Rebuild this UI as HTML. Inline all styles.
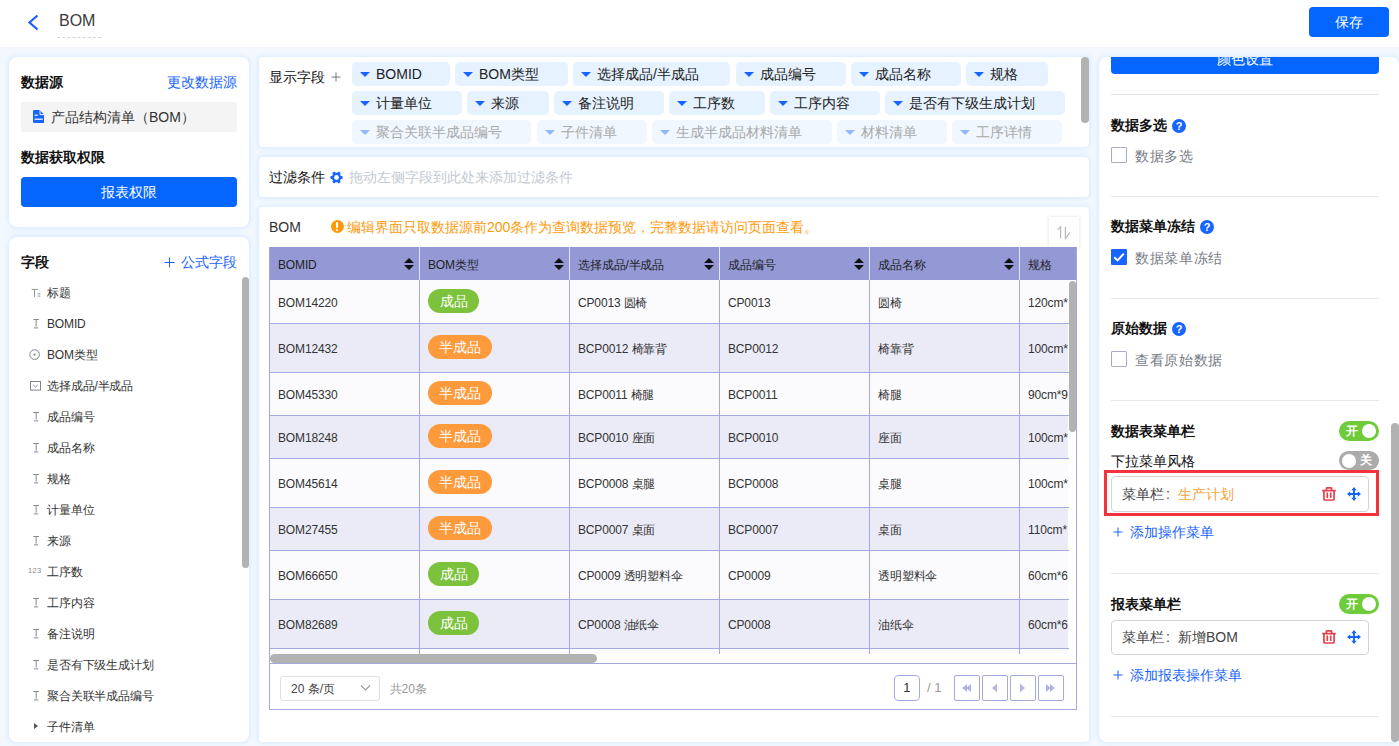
<!DOCTYPE html>
<html lang="zh">
<head>
<meta charset="utf-8">
<title>BOM</title>
<style>
*{box-sizing:border-box;margin:0;padding:0}
html,body{width:1399px;height:746px;overflow:hidden}
body{font-family:"Liberation Sans",sans-serif;font-size:14px;color:#222;background:#f2f8fe;position:relative}
.abs{position:absolute}
.hdr{position:absolute;left:0;top:0;width:1399px;height:47px;background:#fff}
.card{position:absolute;background:#fff;border-radius:8px;box-shadow:0 0 5px 1px rgba(185,212,255,.45)}
.card.m{border-radius:4px}
.b{font-weight:bold}
.blue{color:#1764ff}
.btn{position:absolute;background:#0565ff;color:#fff;border-radius:4px;text-align:center}
.t{position:absolute;white-space:nowrap;line-height:20px}
/* field list */
.fi{position:absolute;left:47px;font-size:12px;letter-spacing:-.15px;color:#333;white-space:nowrap;line-height:16px}
.ic{position:absolute;left:30px;width:12px;height:12px;overflow:visible}
/* tags */
.tag{position:absolute;height:24px;background:#e6f2ff;border-radius:5px;font-size:14px;line-height:24px;color:#222;white-space:nowrap}
.tag i{position:absolute;left:8px;top:10px;width:0;height:0;border-left:5px solid transparent;border-right:5px solid transparent;border-top:5px solid #1764ff}
.tag span{position:absolute;left:24px;top:0}
.tag.dim{background:#f0f7ff;color:#a9a9a9}
.tag.dim i{border-top-color:#8fb8ff}
/* table */
.th{position:absolute;top:247px;height:33.4px;background:#9499d6;color:#222;font-size:12px;letter-spacing:-.15px;line-height:37.5px;padding-left:9px;white-space:nowrap}
.sort{position:absolute;right:5px;top:10.5px;width:10px;height:12px}
.row{position:absolute;left:269px;width:799.3px;overflow:hidden}
.row.o{background:#fbfbfe}
.row.e{background:#ebebf7}
.c{position:absolute;top:0;bottom:0;font-size:12px;letter-spacing:-.15px;color:#333;white-space:nowrap}
.c span{position:absolute;left:9px;top:50%;margin-top:-6.6px;line-height:16px}
.pill{position:absolute;left:9px;height:24px;border-radius:12px;color:#fff;font-size:14px;line-height:24px;letter-spacing:0;text-align:center;font-weight:normal}
.g{background:#7cc23c;width:51px}
.or{background:#fc9a3c;width:64px}
.vl{position:absolute;width:1px;background:#a6a9de}
.hl{position:absolute;height:1px;background:#e6e8ec}
</style>
</head>
<body>
<div class="hdr">
<svg class="abs" style="left:26px;top:13px" width="14" height="18" viewBox="0 0 14 18"><path d="M11.5 2.5 L3.5 9.5 L11.5 16.5" fill="none" stroke="#1a5cff" stroke-width="2.2" stroke-linecap="butt"/></svg>
<div class="t" style="left:59px;top:11px;font-size:16px;color:#3a3a3a">BOM</div>
<div class="abs" style="left:57px;top:37px;width:44px;height:0;border-top:1px dashed #d4d4d4"></div>
<div class="btn" style="left:1309px;top:7px;width:80px;height:30px;line-height:30px;font-size:14px">保存</div>
</div>

<!-- left card 1 -->
<div class="card" style="left:9px;top:57px;width:240px;height:170px"></div>
<div class="t b" style="left:21px;top:72px;color:#111">数据源</div>
<div class="t blue" style="left:167px;top:72px">更改数据源</div>
<div class="abs" style="left:21px;top:102px;width:216px;height:30px;background:#f4f4f4;border-radius:2px"></div>
<svg class="abs" style="left:32.5px;top:110px" width="11.5" height="13" viewBox="0 0 11.5 13"><path d="M0 1 Q0 0 1 0 H6.6 L11.5 4.9 V12 Q11.5 13 10.5 13 H1 Q0 13 0 12 Z" fill="#1764ff"/><path d="M7 0.2 V4.6 H11.4" fill="none" stroke="#f4f4f4" stroke-width="1"/><rect x="1.6" y="4.6" width="3.2" height="1.2" fill="#fff"/><rect x="1.6" y="8.6" width="8.2" height="1.2" fill="#fff"/></svg>
<div class="t" style="left:51px;top:107px;color:#333">产品结构清单（BOM）</div>
<div class="t b" style="left:21px;top:147px;color:#111">数据获取权限</div>
<div class="btn" style="left:21px;top:177px;width:216px;height:30px;line-height:30px;font-size:14px">报表权限</div>

<!-- left card 2 -->
<div class="card" style="left:9px;top:237px;width:240px;height:505px"></div>
<div class="t b" style="left:21px;top:252px;color:#111">字段</div>
<svg class="abs" style="left:164px;top:257px" width="11" height="11" viewBox="0 0 11 11"><path d="M5.5 0.5 V10.5 M0.5 5.5 H10.5" stroke="#1764ff" stroke-width="1" fill="none"/></svg><div class="t blue" style="left:181px;top:252px">公式字段</div>
<div class="abs" style="left:242px;top:277px;width:7px;height:291px;background:#b2b2b2;border-radius:4px"></div>
<svg class="ic" style="top:286px" viewBox="0 0 12 12"><path d="M1.7 3.4 H8 M4.5 3.4 V10.9 M7.6 7.9 H10.4 M7.6 10.1 H10.4" fill="none" stroke="#959595" stroke-width="1"/></svg><div class="fi" style="top:285px">标题</div>
<svg class="ic" style="top:317px" viewBox="0 0 12 12"><path d="M3.3 2.5 H9 M6.15 2.5 V9.6 M4 10.9 H8.3" fill="none" stroke="#8a8a8a" stroke-width="1"/></svg><div class="fi" style="top:316px">BOMID</div>
<svg class="ic" style="top:348px" viewBox="0 0 12 12"><circle cx="4.6" cy="6.6" r="4.8" fill="none" stroke="#858585" stroke-width="1"/><circle cx="4.6" cy="6.6" r="1.1" fill="#858585"/></svg><div class="fi" style="top:347px">BOM类型</div>
<svg class="ic" style="top:379px" viewBox="0 0 12 12"><rect x="0.5" y="2.5" width="10" height="8.6" fill="none" stroke="#858585" stroke-width="1"/><path d="M3.3 6 L5.5 8 L7.7 6" fill="none" stroke="#858585" stroke-width="1"/></svg><div class="fi" style="top:378px">选择成品/半成品</div>
<svg class="ic" style="top:410px" viewBox="0 0 12 12"><path d="M3.3 2.5 H9 M6.15 2.5 V9.6 M4 10.9 H8.3" fill="none" stroke="#8a8a8a" stroke-width="1"/></svg><div class="fi" style="top:409px">成品编号</div>
<svg class="ic" style="top:441px" viewBox="0 0 12 12"><path d="M3.3 2.5 H9 M6.15 2.5 V9.6 M4 10.9 H8.3" fill="none" stroke="#8a8a8a" stroke-width="1"/></svg><div class="fi" style="top:440px">成品名称</div>
<svg class="ic" style="top:472px" viewBox="0 0 12 12"><path d="M3.3 2.5 H9 M6.15 2.5 V9.6 M4 10.9 H8.3" fill="none" stroke="#8a8a8a" stroke-width="1"/></svg><div class="fi" style="top:471px">规格</div>
<svg class="ic" style="top:503px" viewBox="0 0 12 12"><path d="M3.3 2.5 H9 M6.15 2.5 V9.6 M4 10.9 H8.3" fill="none" stroke="#8a8a8a" stroke-width="1"/></svg><div class="fi" style="top:502px">计量单位</div>
<svg class="ic" style="top:534px" viewBox="0 0 12 12"><path d="M3.3 2.5 H9 M6.15 2.5 V9.6 M4 10.9 H8.3" fill="none" stroke="#8a8a8a" stroke-width="1"/></svg><div class="fi" style="top:533px">来源</div>
<div class="abs" style="top:565px;left:28px;font-size:7.5px;color:#8a8a8a;line-height:12px;letter-spacing:.3px">123</div><div class="fi" style="top:564px">工序数</div>
<svg class="ic" style="top:596px" viewBox="0 0 12 12"><path d="M3.3 2.5 H9 M6.15 2.5 V9.6 M4 10.9 H8.3" fill="none" stroke="#8a8a8a" stroke-width="1"/></svg><div class="fi" style="top:595px">工序内容</div>
<svg class="ic" style="top:627px" viewBox="0 0 12 12"><path d="M3.3 2.5 H9 M6.15 2.5 V9.6 M4 10.9 H8.3" fill="none" stroke="#8a8a8a" stroke-width="1"/></svg><div class="fi" style="top:626px">备注说明</div>
<svg class="ic" style="top:658px" viewBox="0 0 12 12"><path d="M3.3 2.5 H9 M6.15 2.5 V9.6 M4 10.9 H8.3" fill="none" stroke="#8a8a8a" stroke-width="1"/></svg><div class="fi" style="top:657px">是否有下级生成计划</div>
<svg class="ic" style="top:689px" viewBox="0 0 12 12"><path d="M3.3 2.5 H9 M6.15 2.5 V9.6 M4 10.9 H8.3" fill="none" stroke="#8a8a8a" stroke-width="1"/></svg><div class="fi" style="top:688px">聚合关联半成品编号</div>
<div class="abs" style="top:723px;left:34px;width:0;height:0;border-top:3.5px solid transparent;border-bottom:3.5px solid transparent;border-left:4.5px solid #555"></div><div class="fi" style="top:719px">子件清单</div>

<!-- display fields card -->
<div class="card m" style="left:259px;top:57px;width:830px;height:90px"></div>
<div class="t" style="left:269px;top:67px;color:#111">显示字段</div>
<svg class="abs" style="left:331px;top:72px" width="10" height="10" viewBox="0 0 10 10"><path d="M5 0.5 V9.5 M0.5 5 H9.5" stroke="#777" stroke-width="1" fill="none"/></svg>
<div class="tag" style="left:352px;top:62px;width:98px"><i></i><span>BOMID</span></div>
<div class="tag" style="left:455px;top:62px;width:113px"><i></i><span>BOM类型</span></div>
<div class="tag" style="left:573px;top:62px;width:157px"><i></i><span>选择成品/半成品</span></div>
<div class="tag" style="left:736px;top:62px;width:110px"><i></i><span>成品编号</span></div>
<div class="tag" style="left:851px;top:62px;width:110px"><i></i><span>成品名称</span></div>
<div class="tag" style="left:966px;top:62px;width:82px"><i></i><span>规格</span></div>
<div class="tag" style="left:352px;top:91px;width:110px"><i></i><span>计量单位</span></div>
<div class="tag" style="left:467px;top:91px;width:82px"><i></i><span>来源</span></div>
<div class="tag" style="left:554px;top:91px;width:110px"><i></i><span>备注说明</span></div>
<div class="tag" style="left:669px;top:91px;width:96px"><i></i><span>工序数</span></div>
<div class="tag" style="left:770px;top:91px;width:110px"><i></i><span>工序内容</span></div>
<div class="tag" style="left:885px;top:91px;width:180px"><i></i><span>是否有下级生成计划</span></div>
<div class="tag dim" style="left:352px;top:120px;width:179px"><i></i><span>聚合关联半成品编号</span></div>
<div class="tag dim" style="left:537px;top:120px;width:110px"><i></i><span>子件清单</span></div>
<div class="tag dim" style="left:652px;top:120px;width:180px"><i></i><span>生成半成品材料清单</span></div>
<div class="tag dim" style="left:837px;top:120px;width:110px"><i></i><span>材料清单</span></div>
<div class="tag dim" style="left:952px;top:120px;width:110px"><i></i><span>工序详情</span></div>
<div class="abs" style="left:1081px;top:57px;width:8px;height:66px;background:#b2b2b2;border-radius:4px"></div>

<!-- filter card -->
<div class="card m" style="left:259px;top:157px;width:830px;height:40px"></div>
<div class="t" style="left:269px;top:167px;color:#111">过滤条件</div>
<svg class="abs" style="left:330.2px;top:170.7px" width="13" height="13" viewBox="0 0 14 14"><g fill="#1764ff" transform="rotate(90 7 7)"><circle cx="7" cy="7" r="5"/><rect x="5.4" y="0.4" width="3.2" height="13.2" rx="0.8"/><rect x="5.4" y="0.4" width="3.2" height="13.2" rx="0.8" transform="rotate(60 7 7)"/><rect x="5.4" y="0.4" width="3.2" height="13.2" rx="0.8" transform="rotate(120 7 7)"/></g><circle cx="7" cy="7" r="2.6" fill="#fff"/></svg>
<div class="t" style="left:349px;top:167px;color:#c3c9d4">拖动左侧字段到此处来添加过滤条件</div>

<!-- table card -->
<div class="card m" style="left:259px;top:207px;width:830px;height:535px"></div>
<div class="t" style="left:269px;top:217px;color:#333">BOM</div>
<div class="abs" style="left:330.5px;top:220px;width:13px;height:13px;border-radius:7px;background:#ff9a0a"></div>
<div class="abs" style="left:336.15px;top:222px;width:1.7px;height:6.2px;background:#fff;border-radius:1px"></div>
<div class="abs" style="left:336.1px;top:229.2px;width:1.8px;height:1.8px;background:#fff;border-radius:1px"></div>
<div class="t" style="left:347px;top:217px;color:#ff9a0a">编辑界面只取数据源前200条作为查询数据预览，完整数据请访问页面查看。</div>
<div class="abs" style="left:1049px;top:217px;width:30px;height:31px;background:#fff;box-shadow:0 0 4px rgba(0,0,0,.12)"></div>
<svg class="abs" style="left:1057px;top:225px" width="16" height="15" viewBox="0 0 16 15"><path d="M0.6 4.8 L3.6 1.7 V13.6 M8.4 1.7 V13.6 L12.9 7.4" fill="none" stroke="#b9b9b9" stroke-width="1.2"/></svg>
<div class="th" style="left:269px;width:150px">BOMID<svg class="sort" viewBox="0 0 10 12"><path d="M5 0 L10 5 H0 Z M5 12 L10 7 H0 Z" fill="#111"/></svg></div>
<div class="th" style="left:419px;width:150px">BOM类型<svg class="sort" viewBox="0 0 10 12"><path d="M5 0 L10 5 H0 Z M5 12 L10 7 H0 Z" fill="#111"/></svg></div>
<div class="th" style="left:569px;width:150px">选择成品/半成品<svg class="sort" viewBox="0 0 10 12"><path d="M5 0 L10 5 H0 Z M5 12 L10 7 H0 Z" fill="#111"/></svg></div>
<div class="th" style="left:719px;width:150px">成品编号<svg class="sort" viewBox="0 0 10 12"><path d="M5 0 L10 5 H0 Z M5 12 L10 7 H0 Z" fill="#111"/></svg></div>
<div class="th" style="left:869px;width:150px">成品名称<svg class="sort" viewBox="0 0 10 12"><path d="M5 0 L10 5 H0 Z M5 12 L10 7 H0 Z" fill="#111"/></svg></div>
<div class="th" style="left:1019px;width:58px">规格</div>
<div class="abs" style="left:419px;top:247px;width:1px;height:34px;background:#e4e5f5"></div>
<div class="abs" style="left:569px;top:247px;width:1px;height:34px;background:#e4e5f5"></div>
<div class="abs" style="left:719px;top:247px;width:1px;height:34px;background:#e4e5f5"></div>
<div class="abs" style="left:869px;top:247px;width:1px;height:34px;background:#e4e5f5"></div>
<div class="abs" style="left:1019px;top:247px;width:1px;height:34px;background:#e4e5f5"></div>
<div class="row o" style="top:280.4px;height:42.6px"><div class="c" style="left:0px;width:150px"><span>BOM14220</span></div><div class="c" style="left:150px;width:150px"><div class="pill g" style="top:8.25px">成品</div></div><div class="c" style="left:300px;width:150px"><span>CP0013 圆椅</span></div><div class="c" style="left:450px;width:150px"><span>CP0013</span></div><div class="c" style="left:600px;width:150px"><span>圆椅</span></div><div class="c" style="left:750px;width:58px"><span>120cm*</span></div></div>
<div class="row e" style="top:323px;height:49px"><div class="c" style="left:0px;width:150px"><span>BOM12432</span></div><div class="c" style="left:150px;width:150px"><div class="pill or" style="top:11.75px">半成品</div></div><div class="c" style="left:300px;width:150px"><span>BCP0012 椅靠背</span></div><div class="c" style="left:450px;width:150px"><span>BCP0012</span></div><div class="c" style="left:600px;width:150px"><span>椅靠背</span></div><div class="c" style="left:750px;width:58px"><span>100cm*</span></div></div>
<div class="row o" style="top:372px;height:43px"><div class="c" style="left:0px;width:150px"><span>BOM45330</span></div><div class="c" style="left:150px;width:150px"><div class="pill or" style="top:8.75px">半成品</div></div><div class="c" style="left:300px;width:150px"><span>BCP0011 椅腿</span></div><div class="c" style="left:450px;width:150px"><span>BCP0011</span></div><div class="c" style="left:600px;width:150px"><span>椅腿</span></div><div class="c" style="left:750px;width:58px"><span>90cm*9</span></div></div>
<div class="row e" style="top:415px;height:43px"><div class="c" style="left:0px;width:150px"><span>BOM18248</span></div><div class="c" style="left:150px;width:150px"><div class="pill or" style="top:8.75px">半成品</div></div><div class="c" style="left:300px;width:150px"><span>BCP0010 座面</span></div><div class="c" style="left:450px;width:150px"><span>BCP0010</span></div><div class="c" style="left:600px;width:150px"><span>座面</span></div><div class="c" style="left:750px;width:58px"><span>100cm*</span></div></div>
<div class="row o" style="top:458px;height:49.5px"><div class="c" style="left:0px;width:150px"><span>BOM45614</span></div><div class="c" style="left:150px;width:150px"><div class="pill or" style="top:12.0px">半成品</div></div><div class="c" style="left:300px;width:150px"><span>BCP0008 桌腿</span></div><div class="c" style="left:450px;width:150px"><span>BCP0008</span></div><div class="c" style="left:600px;width:150px"><span>桌腿</span></div><div class="c" style="left:750px;width:58px"><span>100cm*</span></div></div>
<div class="row e" style="top:507.5px;height:43.0px"><div class="c" style="left:0px;width:150px"><span>BOM27455</span></div><div class="c" style="left:150px;width:150px"><div class="pill or" style="top:8.75px">半成品</div></div><div class="c" style="left:300px;width:150px"><span>BCP0007 桌面</span></div><div class="c" style="left:450px;width:150px"><span>BCP0007</span></div><div class="c" style="left:600px;width:150px"><span>桌面</span></div><div class="c" style="left:750px;width:58px"><span>110cm*</span></div></div>
<div class="row o" style="top:550.5px;height:48.5px"><div class="c" style="left:0px;width:150px"><span>BOM66650</span></div><div class="c" style="left:150px;width:150px"><div class="pill g" style="top:11.5px">成品</div></div><div class="c" style="left:300px;width:150px"><span>CP0009 透明塑料伞</span></div><div class="c" style="left:450px;width:150px"><span>CP0009</span></div><div class="c" style="left:600px;width:150px"><span>透明塑料伞</span></div><div class="c" style="left:750px;width:58px"><span>60cm*6</span></div></div>
<div class="row e" style="top:599px;height:49px"><div class="c" style="left:0px;width:150px"><span>BOM82689</span></div><div class="c" style="left:150px;width:150px"><div class="pill g" style="top:11.75px">成品</div></div><div class="c" style="left:300px;width:150px"><span>CP0008 油纸伞</span></div><div class="c" style="left:450px;width:150px"><span>CP0008</span></div><div class="c" style="left:600px;width:150px"><span>油纸伞</span></div><div class="c" style="left:750px;width:58px"><span>60cm*6</span></div></div>
<div class="row o" style="top:648px;height:6px"><div class="c" style="left:0px;width:150px"></div><div class="c" style="left:150px;width:150px"></div><div class="c" style="left:300px;width:150px"></div><div class="c" style="left:450px;width:150px"></div><div class="c" style="left:600px;width:150px"></div><div class="c" style="left:750px;width:58px"></div></div>
<div class="abs" style="left:269px;top:322.5px;width:800px;height:1px;background:#a6a9de"></div><div class="abs" style="left:269px;top:371.5px;width:800px;height:1px;background:#a6a9de"></div><div class="abs" style="left:269px;top:414.5px;width:800px;height:1px;background:#a6a9de"></div><div class="abs" style="left:269px;top:457.5px;width:800px;height:1px;background:#a6a9de"></div><div class="abs" style="left:269px;top:507.0px;width:800px;height:1px;background:#a6a9de"></div><div class="abs" style="left:269px;top:550.0px;width:800px;height:1px;background:#a6a9de"></div><div class="abs" style="left:269px;top:598.5px;width:800px;height:1px;background:#a6a9de"></div><div class="abs" style="left:269px;top:647.5px;width:800px;height:1px;background:#a6a9de"></div>
<div class="vl" style="left:269px;top:247px;height:463px"></div>
<div class="vl" style="left:419px;top:280.4px;height:373.6px"></div>
<div class="vl" style="left:569px;top:280.4px;height:373.6px"></div>
<div class="vl" style="left:719px;top:280.4px;height:373.6px"></div>
<div class="vl" style="left:869px;top:280.4px;height:373.6px"></div>
<div class="vl" style="left:1019px;top:280.4px;height:373.6px"></div>
<div class="abs" style="left:1069px;top:281px;width:7px;height:373px;background:#fff"></div>
<div class="abs" style="left:1068.5px;top:281px;width:7.5px;height:151px;background:#b2b2b2;border-radius:4px"></div>
<div class="abs" style="left:270px;top:654px;width:806px;height:9px;background:#fff"></div>
<div class="abs" style="left:270px;top:654px;width:327px;height:9px;background:#b2b2b2;border-radius:5px"></div>
<div class="vl" style="left:1076px;top:247px;height:463px"></div>
<div class="abs" style="left:269px;top:663px;width:808px;height:1px;background:#a6a9de"></div>
<div class="abs" style="left:269px;top:709px;width:808px;height:1px;background:#a6a9de"></div>
<!-- pagination -->
<div class="abs" style="left:280px;top:675.5px;width:100px;height:25px;border:1px solid #dcdfe6;border-radius:3px;background:#fff"></div>
<div class="t" style="left:291px;top:678.5px;font-size:12px;color:#444">20 条/页</div>
<svg class="abs" style="left:360px;top:684px" width="11" height="8" viewBox="0 0 11 8"><path d="M1 1.5 L5.5 6 L10 1.5" fill="none" stroke="#999" stroke-width="1.1"/></svg>
<div class="t" style="left:389.5px;top:678.5px;font-size:12px;color:#999">共20条</div>
<div class="abs" style="left:894px;top:675.3px;width:25.5px;height:25.3px;border:1px solid #a6a9de;border-radius:4px;background:#fff;text-align:center;line-height:23px;font-size:13px;color:#333">1</div>
<div class="t" style="left:927px;top:678px;font-size:13px;color:#999">/ 1</div>
<div class="abs" style="left:954px;top:675.3px;width:25.5px;height:25.3px;border:1px solid #a6a9de;border-radius:2px;background:#fff"></div><svg class="abs" style="left:960px;top:683px" width="13" height="10" viewBox="0 0 13 10"><path d="M7 1 L2.2 5 L7 9 Z M11 1 L6.2 5 L11 9 Z" fill="#b0b3e2"/></svg>
<div class="abs" style="left:982px;top:675.3px;width:25.5px;height:25.3px;border:1px solid #a6a9de;border-radius:2px;background:#fff"></div><svg class="abs" style="left:988px;top:683px" width="13" height="10" viewBox="0 0 13 10"><path d="M9 0.5 L4 5 L9 9.5 Z" fill="#b6b8e4"/></svg>
<div class="abs" style="left:1010px;top:675.3px;width:25.5px;height:25.3px;border:1px solid #a6a9de;border-radius:2px;background:#fff"></div><svg class="abs" style="left:1016px;top:683px" width="13" height="10" viewBox="0 0 13 10"><path d="M4 0.5 L9 5 L4 9.5 Z" fill="#b6b8e4"/></svg>
<div class="abs" style="left:1038px;top:675.3px;width:25.5px;height:25.3px;border:1px solid #a6a9de;border-radius:2px;background:#fff"></div><svg class="abs" style="left:1044px;top:683px" width="13" height="10" viewBox="0 0 13 10"><path d="M2 1 L6.8 5 L2 9 Z M6 1 L10.8 5 L6 9 Z" fill="#b0b3e2"/></svg>

<!-- right card -->
<div class="card" style="left:1099px;top:57px;width:300px;height:685px"></div>
<div class="abs" style="left:1111px;top:57px;width:268px;height:17px;overflow:hidden"><div class="btn" style="left:0;top:-13px;width:268px;height:30px;line-height:30px;font-size:14px;border-radius:4px">颜色设置</div></div>
<div class="hl" style="left:1111px;top:94px;width:268px"></div>
<div class="hl" style="left:1111px;top:196px;width:268px"></div>
<div class="hl" style="left:1111px;top:298px;width:268px"></div>
<div class="hl" style="left:1111px;top:400px;width:268px"></div>
<div class="hl" style="left:1111px;top:573px;width:268px"></div>
<div class="hl" style="left:1111px;top:716px;width:268px"></div>
<div class="t b" style="left:1111px;top:115px;color:#111">数据多选</div><div class="abs" style="left:1172px;top:119px;width:14px;height:14px;border-radius:7px;background:#1764ff;color:#fff;font-size:11px;font-weight:bold;line-height:14px;text-align:center">?</div>
<div class="abs" style="left:1111px;top:147px;width:16px;height:16px;background:#fff;border:1px solid #a9acc0;border-radius:1px"></div>
<div class="t" style="left:1135px;top:146px;color:#777b86;letter-spacing:.7px">数据多选</div>
<div class="t b" style="left:1111px;top:216px;color:#111">数据菜单冻结</div><div class="abs" style="left:1200px;top:220px;width:14px;height:14px;border-radius:7px;background:#1764ff;color:#fff;font-size:11px;font-weight:bold;line-height:14px;text-align:center">?</div>
<div class="abs" style="left:1111px;top:249px;width:16px;height:16px;background:#1764ff;border-radius:1px"></div><svg class="abs" style="left:1111px;top:249px" width="16" height="16" viewBox="0 0 16 16"><path d="M3.2 8.2 L6.6 11.4 L12.8 4.6" fill="none" stroke="#fff" stroke-width="2"/></svg>
<div class="t" style="left:1135px;top:248px;color:#777b86;letter-spacing:.7px">数据菜单冻结</div>
<div class="t b" style="left:1111px;top:318px;color:#111">原始数据</div><div class="abs" style="left:1172px;top:322px;width:14px;height:14px;border-radius:7px;background:#1764ff;color:#fff;font-size:11px;font-weight:bold;line-height:14px;text-align:center">?</div>
<div class="abs" style="left:1111px;top:351px;width:16px;height:16px;background:#fff;border:1px solid #a9acc0;border-radius:1px"></div>
<div class="t" style="left:1135px;top:350px;color:#777b86;letter-spacing:.7px">查看原始数据</div>
<div class="t b" style="left:1111px;top:421px;color:#111">数据表菜单栏</div><div class="abs" style="left:1339px;top:421px;width:40px;height:20px;border-radius:10px;background:#6ecb3a"></div><div class="abs" style="left:1362px;top:424px;width:14px;height:14px;border-radius:7px;background:#fff"></div><div class="t b" style="left:1346px;top:421px;font-size:11.5px;color:#fff;line-height:20px">开</div>
<div class="t" style="left:1111px;top:451px;color:#111">下拉菜单风格</div><div class="abs" style="left:1339px;top:451px;width:40px;height:19px;border-radius:10px;background:#ababab"></div><div class="abs" style="left:1341.7px;top:453.5px;width:14px;height:14px;border-radius:7px;background:#fff"></div><div class="t b" style="left:1360px;top:451px;font-size:11.5px;color:#fff;line-height:19px">关</div>
<div class="abs" style="left:1104px;top:470.4px;width:275px;height:45.6px;border:3px solid #f4323e"></div>
<div class="abs" style="left:1111px;top:476px;width:258px;height:36px;border:1px solid #d4d4d4;border-radius:4px;background:#fff"></div>
<div class="t" style="left:1122px;top:484px;color:#444">菜单栏<span style="display:inline-block;width:14px;padding-left:2px">:</span><span style="color:#f5a33b">生产计划</span></div>
<svg class="abs" style="left:1322px;top:487px" width="14" height="14" viewBox="0 0 14 14"><path d="M0.2 3.7 H13.8 M4.4 3.5 V1.5 Q4.4 0.9 5 0.9 H9 Q9.6 0.9 9.6 1.5 V3.5 M1.9 3.9 V11.9 Q1.9 13 3 13 H11 Q12.1 13 12.1 11.9 V3.9 M5.3 5.6 V10.9 M8.7 5.6 V10.9" fill="none" stroke="#e0414d" stroke-width="1.7"/></svg><svg class="abs" style="left:1347px;top:487px" width="14" height="14" viewBox="0 0 14 14"><path d="M7 1.5 V12.5 M1.5 7 H12.5" fill="none" stroke="#1764ff" stroke-width="1.9"/><path d="M7 0 L9.7 3.3 H4.3 Z M7 14 L9.7 10.7 H4.3 Z M0 7 L3.3 4.3 V9.7 Z M14 7 L10.7 4.3 V9.7 Z" fill="#1764ff"/></svg>
<svg class="abs" style="left:1113px;top:527px" width="10" height="10" viewBox="0 0 10 10"><path d="M5 0.5 V9.5 M0.5 5 H9.5" stroke="#1764ff" stroke-width="1" fill="none"/></svg><div class="t blue" style="left:1130px;top:522px">添加操作菜单</div>
<div class="t b" style="left:1111px;top:594px;color:#111">报表菜单栏</div><div class="abs" style="left:1339px;top:594px;width:40px;height:20px;border-radius:10px;background:#6ecb3a"></div><div class="abs" style="left:1362px;top:597px;width:14px;height:14px;border-radius:7px;background:#fff"></div><div class="t b" style="left:1346px;top:594px;font-size:11.5px;color:#fff;line-height:20px">开</div>
<div class="abs" style="left:1111px;top:620px;width:258px;height:35px;border:1px solid #d4d4d4;border-radius:4px;background:#fff"></div>
<div class="t" style="left:1122px;top:627px;color:#444">菜单栏<span style="display:inline-block;width:14px;padding-left:2px">:</span>新增BOM</div>
<svg class="abs" style="left:1322px;top:630px" width="14" height="14" viewBox="0 0 14 14"><path d="M0.2 3.7 H13.8 M4.4 3.5 V1.5 Q4.4 0.9 5 0.9 H9 Q9.6 0.9 9.6 1.5 V3.5 M1.9 3.9 V11.9 Q1.9 13 3 13 H11 Q12.1 13 12.1 11.9 V3.9 M5.3 5.6 V10.9 M8.7 5.6 V10.9" fill="none" stroke="#e0414d" stroke-width="1.7"/></svg><svg class="abs" style="left:1347px;top:630px" width="14" height="14" viewBox="0 0 14 14"><path d="M7 1.5 V12.5 M1.5 7 H12.5" fill="none" stroke="#1764ff" stroke-width="1.9"/><path d="M7 0 L9.7 3.3 H4.3 Z M7 14 L9.7 10.7 H4.3 Z M0 7 L3.3 4.3 V9.7 Z M14 7 L10.7 4.3 V9.7 Z" fill="#1764ff"/></svg>
<svg class="abs" style="left:1113px;top:670px" width="10" height="10" viewBox="0 0 10 10"><path d="M5 0.5 V9.5 M0.5 5 H9.5" stroke="#1764ff" stroke-width="1" fill="none"/></svg><div class="t blue" style="left:1130px;top:665px">添加报表操作菜单</div>
<div class="abs" style="left:1391px;top:423px;width:8px;height:319px;background:#b2b2b2;border-radius:4px"></div>
</body>
</html>
